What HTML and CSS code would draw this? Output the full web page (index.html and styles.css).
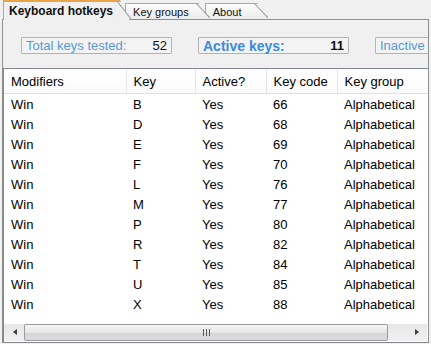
FILE: index.html
```html
<!DOCTYPE html>
<html lang="en">
<head>
  <meta charset="UTF-8">
  <title>Keyboard hotkeys</title>
  <link rel="stylesheet" href="styles.css">
</head>
<body>

  <div class="tabs">
    <div class="tab active">Keyboard hotkeys</div>
    <div class="tab">Key groups</div>
    <div class="tab">About</div>
  </div>

  <div class="panel">
    <div class="stats">
      <div class="stat"><span class="label">Total keys tested:</span><span class="num">52</span></div>
      <div class="stat strong"><span class="label">Active keys:</span><span class="num">11</span></div>
      <div class="stat"><span class="label">Inactive keys:</span><span class="num">41</span></div>
    </div>

    <div class="grid">
      <table class="keys">
        <colgroup>
          <col class="c-mod"><col class="c-key"><col class="c-act"><col class="c-code"><col>
        </colgroup>
        <thead>
          <tr><th>Modifiers</th><th>Key</th><th>Active?</th><th>Key code</th><th>Key group</th></tr>
        </thead>
      </table>
      <div class="rows">
        <table class="keys">
          <colgroup>
            <col class="c-mod"><col class="c-key"><col class="c-act"><col class="c-code"><col>
          </colgroup>
          <tbody id="rows"></tbody>
        </table>
      </div>
      <div class="hscroll">
        <span class="arrow left"></span>
        <div class="thumb"><span class="grip"></span></div>
        <span class="arrow right"></span>
      </div>
    </div>
  </div>

  <script>
    // win + letter hotkeys that are registered
    const keys = [
      ['B', 66], ['D', 68], ['E', 69], ['F', 70], ['L', 76], ['M', 77],
      ['P', 80], ['R', 82], ['T', 84], ['U', 85], ['X', 88]
    ];
    const tbody = document.getElementById('rows');
    keys.forEach(([k, code]) => {
      const tr = document.createElement('tr');
      tr.innerHTML = `<td>Win</td><td>${k}</td><td>Yes</td><td>${code}</td><td>Alphabetical</td>`;
      tbody.appendChild(tr);
    });
  </script>

</body>
</html>
```

FILE: styles.css
```css
body {
  margin: 0;
  background: #f0f0f0;
  font-family: "Liberation Sans", Arial, sans-serif;
  font-size: 13px;
  color: #000;
  overflow: hidden;
}

.tabs {
  display: flex;
  align-items: flex-end;
  height: 19px;
  padding-left: 3px;
  position: relative;
  z-index: 2;
}

.tab {
  position: relative;
  height: 15px;
  line-height: 16px;
  padding: 0 8px 0 7px;
  margin-right: 8px;
  border-top: 1px solid #a9a9a9;
  border-left: 1px solid #a9a9a9;
  background: linear-gradient(#fcfcfc, #ececec);
  font-size: 11px;
  color: #111;
}

.tab:nth-child(2) { z-index: 2; }
.tab:nth-child(3) { z-index: 1; padding-right: 14px; }

.tab::after {
  content: '';
  position: absolute;
  top: -1px;
  right: -12px;
  width: 12px;
  height: 100%;
  border-top: 1px solid #a9a9a9;
  background: inherit;
  clip-path: polygon(0 0, 2px 0, 100% 100%, 0 100%);
}

.tab::before {
  content: '';
  position: absolute;
  top: -1px;
  right: -13px;
  width: 14px;
  height: 100%;
  background: linear-gradient(to top right, transparent calc(50% - 1px), #9a9a9a 50%, transparent calc(50% + 1px));
  z-index: 1;
}

.tab.active {
  height: 18px;
  line-height: 19px;
  padding: 0 5px 0 5px;
  margin-right: 7px;
  margin-bottom: -1px;
  border-top: 2px solid #e9a34a;
  background: #f0f0f0;
  font-size: 12px;
  font-weight: bold;
  z-index: 3;
}

.tab.active::after {
  top: -2px;
  border-top: 2px solid #e9a34a;
  height: calc(100% + 1px);
}

.panel {
  margin-left: 2px;
  width: 425px;
  border-top: 1px solid #8e8f8f;
  border-left: 1px solid #8e8f8f;
  border-right: 1px solid #8e8f8f;
  padding-top: 17px;
}

.stats {
  display: flex;
  gap: 26px;
  padding-left: 18px;
  overflow: hidden;
  white-space: nowrap;
}

.stat {
  flex: 0 0 auto;
  display: flex;
  justify-content: space-between;
  align-items: center;
  width: 141px;
  height: 15px;
  padding: 0 4px;
  border: 1px solid #b3b3b3;
  border-radius: 1px;
  background: #f3f3f3;
  font-size: 13px;
}

.stat .label {
  color: #5b98d6;
}

.stat .num {
  color: #111;
}

.stat.strong .label {
  color: #3b8ae0;
  font-weight: bold;
  font-size: 14px;
}

.stat.strong .num {
  font-weight: bold;
}

.grid {
  margin-top: 14px;
  border: 1px solid #828790;
  border-right: none;
  background: #fff;
}

.keys {
  width: 100%;
  border-collapse: collapse;
  table-layout: fixed;
}

.c-mod { width: 122px; }
.c-key { width: 69px; }
.c-act { width: 71px; }
.c-code { width: 71px; }

.keys th {
  height: 24px;
  padding: 0 0 0 7px;
  text-align: left;
  font-weight: normal;
  border-bottom: 1px solid #e2e2e2;
  border-left: 1px solid #e5e5e5;
  background: linear-gradient(#ffffff, #fafafa);
  white-space: nowrap;
}

.keys th:first-child {
  border-left: none;
}

.rows {
  height: 229px;
  overflow: hidden;
}

.keys td {
  height: 20px;
  padding: 0 0 0 7px;
  white-space: nowrap;
}

.hscroll {
  display: flex;
  align-items: center;
  height: 17px;
  margin: 1px 1px 1px 0;
  background: linear-gradient(#e6e6e6, #f2f2f2);
}

.arrow {
  width: 20px;
  height: 17px;
  position: relative;
}

.arrow::after {
  content: '';
  position: absolute;
  top: 5px;
  border-top: 3.5px solid transparent;
  border-bottom: 3.5px solid transparent;
}

.arrow.left::after {
  left: 9px;
  border-right: 4px solid #3c3c3c;
}

.arrow.right::after {
  left: 8px;
  border-left: 4px solid #3c3c3c;
}

.thumb {
  flex: 1;
  height: 15px;
  margin-right: 19px;
  border: 1px solid #9c9c9c;
  border-radius: 2px;
  background: linear-gradient(#f6f6f6, #e6e6e6 50%, #d5d5d5 51%, #dcdcdc);
  display: flex;
  justify-content: center;
  align-items: center;
}

.grip {
  width: 7px;
  height: 7px;
  background: repeating-linear-gradient(to right, #5a5a5a 0 1px, transparent 1px 3px);
}
```
